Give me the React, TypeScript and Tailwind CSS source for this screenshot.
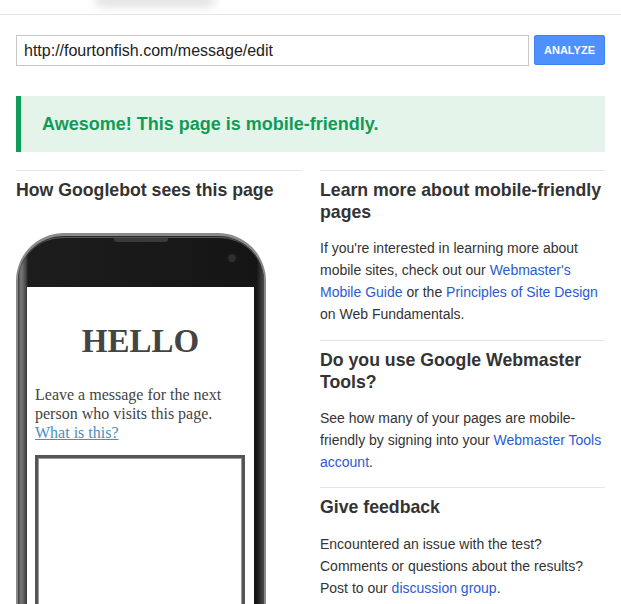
const sans = "font-['Liberation_Sans',Arial,sans-serif]";

function Phone() {
  return (
    <div className="w-[250px] rounded-t-[48px] border-t-[3px] border-x-[2px] border-[#8a8a8a] bg-[#2a2a2a] pt-[1px]">
      <div className="relative rounded-t-[45px] border-t-[1px] border-[#555] bg-[linear-gradient(90deg,#3c3c3c_0px,#7a7a7a_3px,#444_8px,#1d1d1d_10px,#151515_97%,#4a4a4a_100%)]">
        {/* ear piece + camera */}
        <div className="mx-auto h-[4px] w-[54px] rounded-b-[3px] bg-[#3a3a3a]" />
        <div className="absolute right-[28px] top-[16px] h-[8px] w-[8px] rounded-full bg-[#2e2e2e]" />
        <div className="h-[45px]" />
        <div className="ml-[9px] mr-[10px] h-[330px] bg-white px-[8px] pt-[34px] font-['Liberation_Serif','Times_New_Roman',serif] text-[#444]">
          <div className="text-center text-[33px] font-bold leading-[40px]">HELLO</div>
          <p className="mt-[24px] text-[16px] leading-[19px]">
            Leave a message for the next person who visits this page.{" "}
            <span className="text-[#4a8fbf] underline">What is this?</span>
          </p>
          <div className="mt-[13px] mr-[1px] h-[200px] border-[3px] border-[#555] outline outline-1 -outline-offset-[4px] outline-[#999]" />
        </div>
      </div>
    </div>
  );
}

export default function App() {
  return (
    <div className={`${sans} min-h-screen bg-white text-[#333]`}>
      {/* top strip */}
      <div className="h-[15px] overflow-hidden border-b border-[#e6e6e6]">
        <div className="ml-[95px] mt-[-6px] h-[13px] w-[120px] rounded-full bg-[#e2e2e2] blur-[5px]" />
      </div>

      <div className="px-4">
        <div className="mt-[20px] flex gap-[5px]">
          <div className="flex h-[31px] flex-1 items-center border border-[#c8c8c8] px-[7px] text-[16px] text-[#222]">
            http://fourtonfish.com/message/edit
          </div>
          <button
            type="button"
            className="h-[30px] w-[71px] rounded-[2px] border border-[#3f83f0] bg-[#4d90fe] text-[11px] font-bold text-white"
          >
            ANALYZE
          </button>
        </div>

        <div className="mt-[30px] flex h-[56px] items-center border-l-[5px] border-[#0f9d58] bg-[#e4f4ea] pl-[21px] text-[18px] font-bold text-[#109b57]">
          Awesome! This page is mobile-friendly.
        </div>

        <div className="mt-[18px] grid grid-cols-[286px_285px] gap-[18px]">
          {/* left column */}
          <div className="border-t border-[#e6e6e6] pt-[8px]">
            <h2 className="text-[17.7px] font-bold leading-[22px] text-[#333]">How Googlebot sees this page</h2>
            <div className="mt-[32px]">
              <Phone />
            </div>
          </div>

          {/* right column */}
          <div className="text-[14px] leading-[22px]">
            <section className="border-t border-[#e6e6e6] pt-[8px] pb-[15px]">
              <h2 className="text-[17.7px] font-bold leading-[22px] text-[#333]">Learn more about mobile-friendly pages</h2>
              <p className="mt-[14px]">
                If you're interested in learning more about mobile sites, check out our{" "}
                <a className="text-[#2a5bd0]">Webmaster's Mobile Guide</a> or the{" "}
                <a className="text-[#2a5bd0]">Principles of Site Design</a> on Web Fundamentals.
              </p>
            </section>
            <section className="border-t border-[#e6e6e6] pt-[8px] pb-[14px]">
              <h2 className="text-[17.7px] font-bold leading-[22px] text-[#333]">Do you use Google Webmaster Tools?</h2>
              <p className="mt-[14px]">
                See how many of your pages are mobile-friendly by signing into your{" "}
                <a className="text-[#2a5bd0]">Webmaster Tools account</a>.
              </p>
            </section>
            <section className="border-t border-[#e6e6e6] pt-[8px] pb-[14px]">
              <h2 className="text-[17.7px] font-bold leading-[22px] text-[#333]">Give feedback</h2>
              <p className="mt-[15px]">
                Encountered an issue with the test? Comments or questions about the results? Post to our{" "}
                <a className="text-[#2a5bd0]">discussion group</a>.
              </p>
            </section>
          </div>
        </div>
      </div>
    </div>
  );
}
